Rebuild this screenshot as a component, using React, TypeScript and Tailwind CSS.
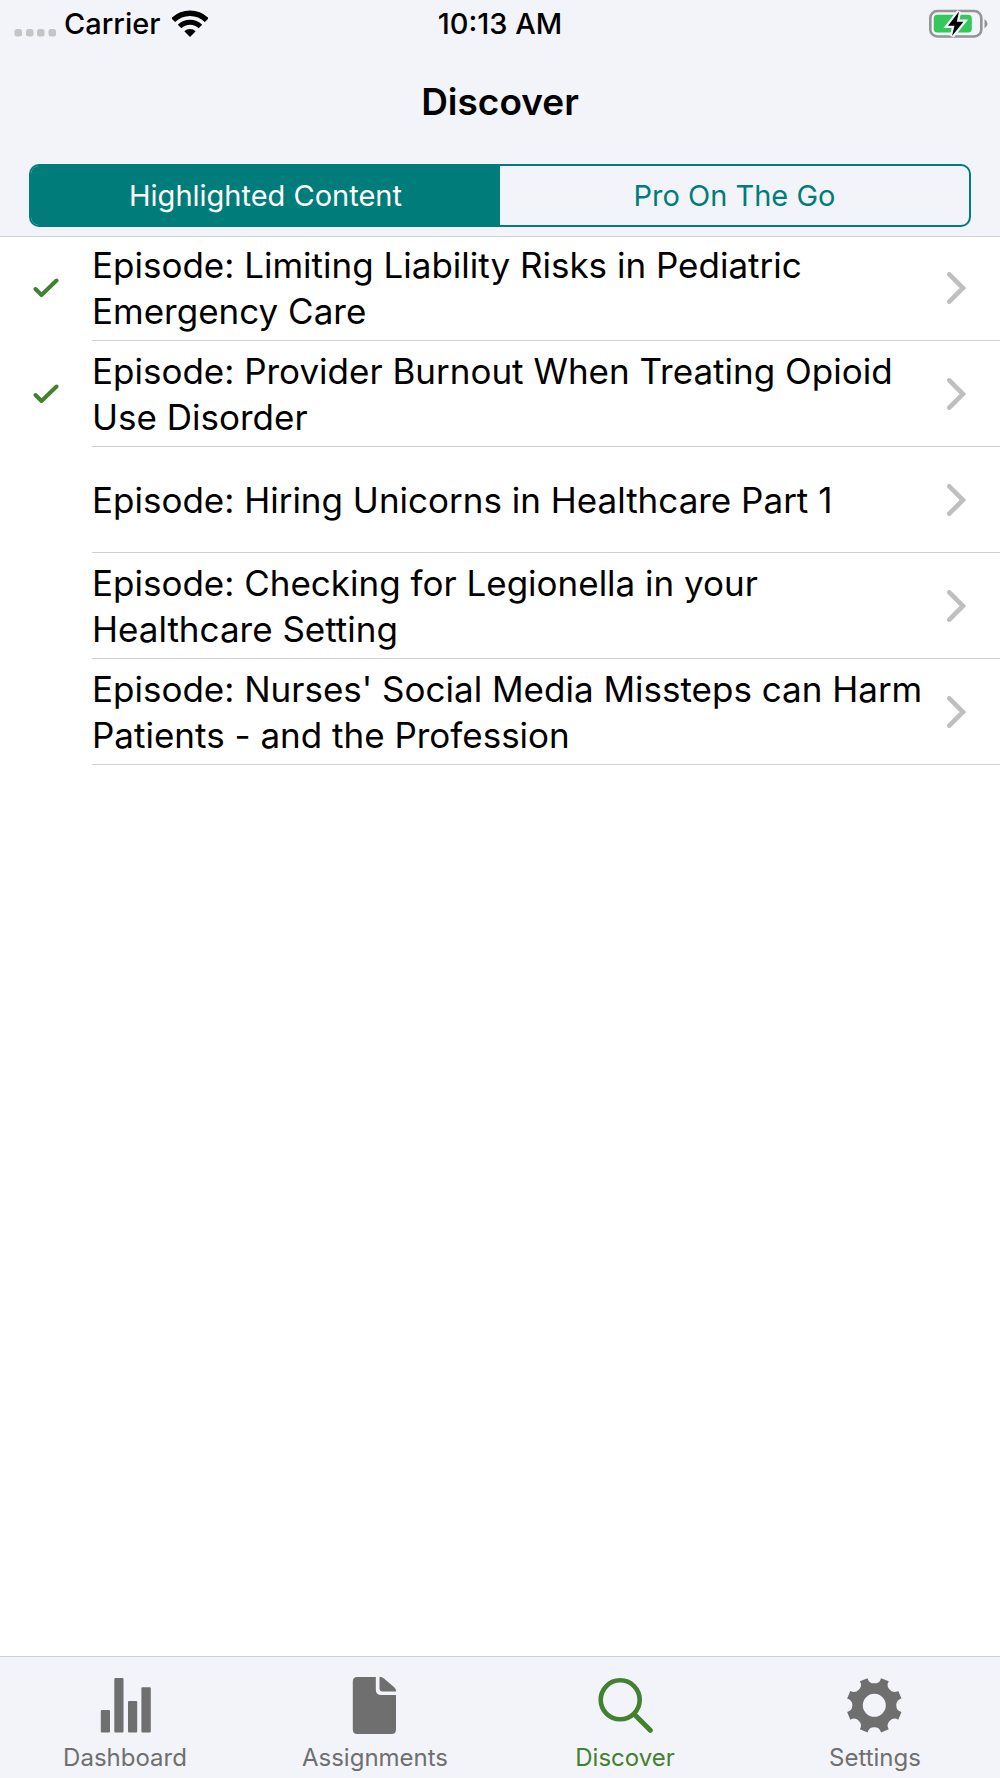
import { useState } from "react";

interface Episode {
  title: string;
  done: boolean;
}

const episodes: Episode[] = [
  { title: "Episode: Limiting Liability Risks in Pediatric Emergency Care", done: true },
  { title: "Episode: Provider Burnout When Treating Opioid Use Disorder", done: true },
  { title: "Episode: Hiring Unicorns in Healthcare Part 1", done: false },
  { title: "Episode: Checking for Legionella in your Healthcare Setting", done: false },
  { title: "Episode: Nurses' Social Media Missteps can Harm Patients - and the Profession", done: false },
];

const segments = ["Highlighted Content", "Pro On The Go"];

// eight teeth, one round notch every 45 degrees
const gearPath = () => {
  const point = (deg: number) => {
    const a = (deg * Math.PI) / 180;
    return `${(27.3 + 28 * Math.sin(a)).toFixed(2)} ${(27.3 - 28 * Math.cos(a)).toFixed(2)}`;
  };
  let d = `M${point(-14)}`;
  for (let i = 0; i < 8; i++) {
    d += `A7 7 0 0 0 ${point(i * 45 + 14)}L${point(i * 45 + 31)}`;
  }
  return d + "ZM27.3 15.8a11.5 11.5 0 1 0 0 23a11.5 11.5 0 1 0 0-23Z";
};

const DashboardIcon = () => (
  <svg className="w-14 h-14" viewBox="0 0 56 56" fill="currentColor">
    <rect x="3.8" y="32" width="9.2" height="22.5" rx="1" />
    <rect x="17.3" y="0" width="9.2" height="54.5" rx="1" />
    <rect x="31" y="23" width="9.2" height="31.5" rx="1" />
    <rect x="44.4" y="9.2" width="9.4" height="45.3" rx="1" />
  </svg>
);

const AssignmentsIcon = () => (
  <svg className="w-14 h-14 overflow-visible" viewBox="0 0 56 56" fill="currentColor">
    <path d="M10 -1H28.800V11.500Q28.800 17 34.500 17H49V51.500Q49 56 44.500 56H10.300Q5.800 56 5.800 51.500V3.500Q5.800 -1 10.300 -1Z" />
    <path d="M32.500 -1H34Q35.500 -1 37 0.500L47.500 9.500Q49 11 49 12.500V13.500H35.500Q32.500 13.500 32.500 10.500Z" />
  </svg>
);

const SearchIcon = () => (
  <svg className="w-14 h-14" viewBox="0 0 56 56" fill="none" stroke="currentColor">
    <circle cx="23.2" cy="21.8" r="19.500" strokeWidth="4.600" />
    <path d="M37 36L53.300 52.300" strokeWidth="5" strokeLinecap="round" />
  </svg>
);

const SettingsIcon = () => (
  <svg className="w-14 h-14 overflow-visible" viewBox="0 0 56 56" fill="currentColor" fillRule="evenodd">
    <path d={gearPath()} />
  </svg>
);

const tabs = [
  { label: "Dashboard", Icon: DashboardIcon },
  { label: "Assignments", Icon: AssignmentsIcon },
  { label: "Discover", Icon: SearchIcon },
  { label: "Settings", Icon: SettingsIcon },
];

const StatusBar = () => (
  <div className="grid grid-cols-3 items-center h-12 px-3.5 text-[29px] leading-8 font-medium">
    <div className="flex items-center">
      <svg className="w-[42px] h-8" viewBox="0 0 42 32" fill="#c4c4c6">
        <rect x="0.500" y="21" width="7.500" height="7.500" rx="2.500" />
        <rect x="12" y="21" width="7.500" height="7.500" rx="2.500" />
        <rect x="23" y="21" width="7.500" height="7.500" rx="2.500" />
        <rect x="34.500" y="21" width="7.500" height="7.500" rx="2.500" />
      </svg>
      <span className="ml-2">Carrier</span>
      <svg className="ml-3 w-9 h-7" viewBox="0 0 36 28" fill="none" stroke="#000">
        <path d="M1.200 10.200A23.800 23.800 0 0 1 34.800 10.200" strokeWidth="5.400" />
        <path d="M7.600 16.600A14.700 14.700 0 0 1 28.400 16.600" strokeWidth="5" />
        <path d="M12.300 21.300A8 8 0 0 1 23.700 21.300L18 27Z" fill="#000" stroke="none" />
      </svg>
    </div>
    <span className="text-center">10:13 AM</span>
    <svg className="justify-self-end w-[60px] h-7 overflow-visible" viewBox="0 0 60 28">
      <rect x="4.300" y="1" width="51" height="25.500" rx="7" fill="none" stroke="#929496" strokeWidth="2.600" />
      <rect x="7.800" y="4.800" width="38" height="17.700" rx="3.500" fill="#34c759" />
      <path d="M58.500 9Q64.500 13.500 58.500 18.500Z" fill="#929496" />
      <path
        d="M33 1.500L22 15.800H28.500L26 26L37.500 11.800H30.800Z"
        fill="#000"
        stroke="#f3f4f9"
        strokeWidth="4.500"
        paintOrder="stroke"
      />
    </svg>
  </div>
);

const App = () => {
  const [segment, setSegment] = useState(0);

  return (
    <div className="min-h-screen flex flex-col bg-white text-black font-['Inter',sans-serif]">
      {/* Header */}
      <header className="relative z-10 flex flex-col h-[236px] bg-[#f3f4f9] shadow-[0_1px_0_#cfd0d4]">
        <StatusBar />
        <h1 className="mt-7 text-center text-[37px] leading-[52px] font-semibold">
          Discover
        </h1>
        <div className="flex mt-9 mx-[29px] h-[63px] border-2 border-[#007d7b] rounded-[10px] overflow-hidden">
          {segments.map((name, index) => (
            <button
              key={name}
              onClick={() => setSegment(index)}
              className={
                index === segment
                  ? "flex-1 bg-[#007d7b] text-white text-[29px] leading-8"
                  : "flex-1 text-[#007d7b] text-[29px] leading-8"
              }
            >
              {name}
            </button>
          ))}
        </div>
      </header>

      {/* Episodes */}
      <main className="flex-1 -mt-px">
        <ul>
          {episodes.map((episode) => (
            <li key={episode.title}>
              <a href="#episode" className="flex min-h-[106px]">
                <span className="w-[92px] shrink-0 flex items-center pl-[33px]">
                  {episode.done && (
                    <svg className="w-[26px] h-5" viewBox="0 0 26 20" fill="none" stroke="#43802f" strokeWidth="4">
                      <path d="M2.500 11L8.500 17L23.500 2.500" strokeLinecap="round" strokeLinejoin="round" />
                    </svg>
                  )}
                </span>
                <span className="flex-1 flex items-center justify-between border-b border-[#d0d0d2] pr-[34px]">
                  <span className="flex-1 text-[35px] leading-[46px]">{episode.title}</span>
                  <svg className="ml-2 w-5 h-8" viewBox="0 0 20 32" fill="none" stroke="#bfbfbf" strokeWidth="4.600">
                    <path d="M3.300 2.300L17 16L3.300 29.700" strokeLinecap="round" />
                  </svg>
                </span>
              </a>
            </li>
          ))}
        </ul>
      </main>

      {/* Tab bar */}
      <nav className="grid grid-cols-4 h-[122px] bg-[#f3f4f9] border-t border-[#cbcfd6]">
        {tabs.map(({ label, Icon }) => (
          <a
            key={label}
            href="#tab"
            className={
              label === "Discover"
                ? "flex flex-col items-center pt-[21px] text-[#43802f]"
                : "flex flex-col items-center pt-[21px] text-[#6f6f6f]"
            }
          >
            <Icon />
            <span className="mt-2 text-2xl leading-8">{label}</span>
          </a>
        ))}
      </nav>
    </div>
  );
};

export default App;
